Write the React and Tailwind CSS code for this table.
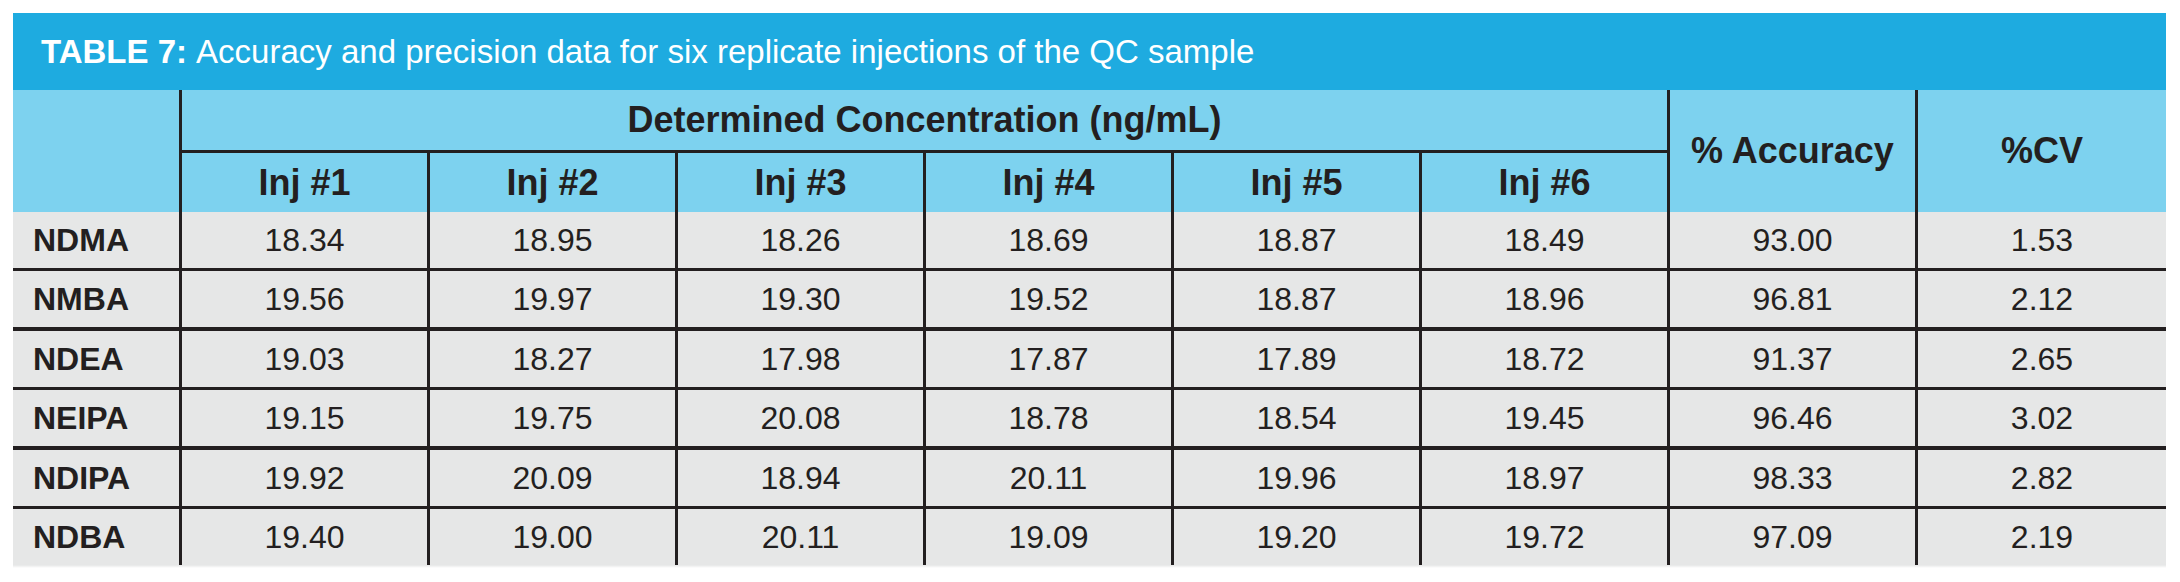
const ROWS = [
  { name: "NDMA", inj: ["18.34", "18.95", "18.26", "18.69", "18.87", "18.49"], acc: "93.00", cv: "1.53", h: "h-[59px]", line: "border-b-[3px]" },
  { name: "NMBA", inj: ["19.56", "19.97", "19.30", "19.52", "18.87", "18.96"], acc: "96.81", cv: "2.12", h: "h-[60px]", line: "border-b-4" },
  { name: "NDEA", inj: ["19.03", "18.27", "17.98", "17.87", "17.89", "18.72"], acc: "91.37", cv: "2.65", h: "h-[59px]", line: "border-b-[3px]" },
  { name: "NEIPA", inj: ["19.15", "19.75", "20.08", "18.78", "18.54", "19.45"], acc: "96.46", cv: "3.02", h: "h-[60px]", line: "border-b-4" },
  { name: "NDIPA", inj: ["19.92", "20.09", "18.94", "20.11", "19.96", "18.97"], acc: "98.33", cv: "2.82", h: "h-[59px]", line: "border-b-[3px]" },
  { name: "NDBA", inj: ["19.40", "19.00", "20.11", "19.09", "19.20", "19.72"], acc: "97.09", cv: "2.19", h: "h-[56px]", line: "" },
];

export default function App() {
  return (
    <div className="min-h-[582px] bg-white pt-[13px] pl-[13px] font-['Liberation_Sans',Arial,sans-serif] text-[#231f20]">
      <div className="w-[2153px]">
        {/* title band */}
        <div className="h-[77px] bg-[#1eabe0] flex items-center pl-[28px] text-white text-[33px] leading-none">
          <span className="font-bold">TABLE 7:</span>
          <span className="ml-[9px]">Accuracy and precision data for six replicate injections of the QC sample</span>
        </div>

        {/* header */}
        <div className="flex bg-[#7dd2ef] font-bold text-[36px] leading-none">
          <div className="w-[169px] h-[122px] border-r-[3px] border-[#231f20]" />
          <div className="w-[1488px] flex flex-col">
            <div className="h-[63px] border-b-[3px] border-r-[3px] border-[#231f20] flex items-center justify-center">
              Determined Concentration (ng/mL)
            </div>
            <div className="h-[59px] flex">
              {[1, 2, 3, 4, 5, 6].map((n) => (
                <div key={n} className="w-[248px] border-r-[3px] border-[#231f20] flex items-center justify-center">
                  Inj #{n}
                </div>
              ))}
            </div>
          </div>
          <div className="w-[248px] h-[122px] border-r-[3px] border-[#231f20] flex items-center justify-center">
            % Accuracy
          </div>
          <div className="w-[248px] h-[122px] flex items-center justify-center">%CV</div>
        </div>

        {/* data */}
        <div className="bg-[#e6e7e7] text-[32px] leading-none">
          {ROWS.map((r) => (
            <div key={r.name} className={`flex ${r.h} ${r.line} border-[#231f20]`}>
              <div className="w-[169px] border-r-[3px] border-[#231f20] flex items-center pl-[20px] font-bold">
                {r.name}
              </div>
              {r.inj.map((v, i) => (
                <div key={i} className="w-[248px] border-r-[3px] border-[#231f20] flex items-center justify-center">
                  {v}
                </div>
              ))}
              <div className="w-[248px] border-r-[3px] border-[#231f20] flex items-center justify-center">{r.acc}</div>
              <div className="w-[248px] flex items-center justify-center">{r.cv}</div>
            </div>
          ))}
          <div className="h-[3px] bg-gradient-to-b from-[#e6e7e7] to-white" />
        </div>
      </div>
    </div>
  );
}
